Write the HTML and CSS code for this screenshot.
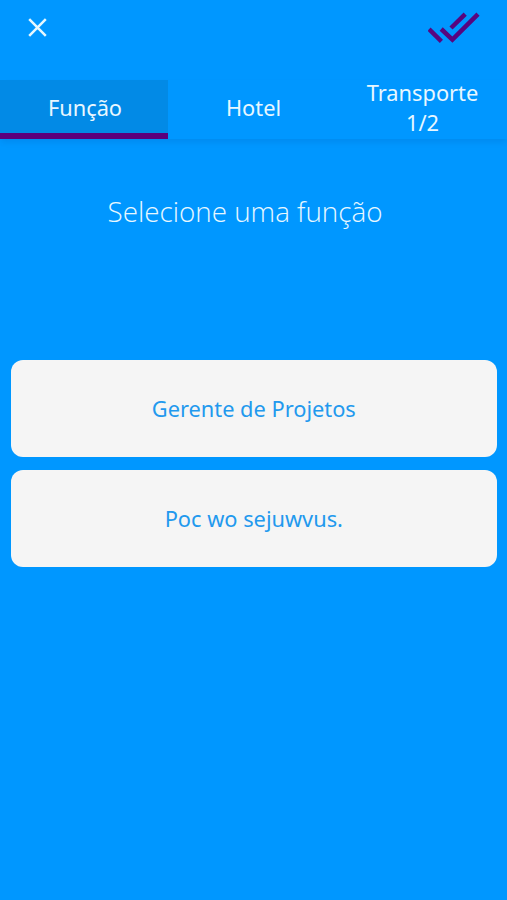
FILE: index.html
```
<!DOCTYPE html>
<html lang="pt-BR">
<head>
    <meta charset="UTF-8">
    <meta name="viewport" content="width=device-width, initial-scale=1.0">
    <title>Selecione uma função</title>
    <link rel="stylesheet" href="styles.css">
</head>
<body>

    <!-- Top bar -->
    <header class="top-bar">
        <svg class="close-icon" viewBox="0 0 20 20" width="20" height="20">
            <path d="M1.2 1.2 L17.8 17.8 M17.8 1.2 L1.2 17.8" />
        </svg>
        <svg class="check-icon" viewBox="0 0 52 32" width="52" height="32">
            <path d="M1 17.2 L13.4 29.4" />
            <path d="M13.2 17 L24.4 27.6 L50 2.2" />
            <path d="M23 16 L37.2 2.2" />
        </svg>
    </header>

    <!-- Tabs -->
    <nav class="tabs">
        <a class="tab active">Função</a>
        <a class="tab">Hotel</a>
        <a class="tab">Transporte 1/2</a>
    </nav>

    <main class="content">
        <h1 class="title">Selecione uma função</h1>

        <div class="options">
            <button class="option" type="button">Gerente de Projetos</button>
            <button class="option" type="button">Poc wo sejuwvus.</button>
        </div>
    </main>

</body>
</html>
```
FILE: styles.css
```
body {
    margin: 0;
    min-height: 900px;
    background: #0097ff;
    color: #fff;
    font-family: "Noto Sans", sans-serif;
}

/* Top bar */
.top-bar {
    display: flex;
    justify-content: space-between;
    align-items: flex-start;
    box-sizing: border-box;
    height: 80px;
    padding: 12px 27px 0 28px;
}

.close-icon {
    margin-top: 6px;
    fill: none;
    stroke: #e6f8ff;
    stroke-width: 2.5;
}

.check-icon {
    fill: none;
    stroke: #58067f;
    stroke-width: 4.5;
}

/* Tabs */
.tabs {
    display: grid;
    grid-template-columns: repeat(3, 1fr);
    grid-template-rows: 59px;
    height: 59px;
    box-shadow: 0 4px 6px -1px rgba(0, 30, 90, 0.1);
}

.tab {
    display: flex;
    align-items: center;
    justify-content: center;
    box-sizing: border-box;
    padding: 0 20px 3px;
    color: #e8f7ff;
    font-size: 21.8px;
    line-height: 30px;
    text-align: center;
}

.tab.active {
    width: 168px;
    padding: 2px 19px 0 21px;
    border-bottom: 6px solid #5c007c;
    background: #028ae6;
}

/* Content */
.title {
    margin: 52px 0 0;
    padding-right: 17px;
    color: #e8f7ff;
    font-family: "Open Sans", sans-serif;
    font-size: 27.8px;
    font-weight: 300;
    line-height: 40px;
    text-align: center;
}

.options {
    display: flex;
    flex-direction: column;
    gap: 12.4px;
    margin-top: 128.6px;
    padding: 0 10px 0 10.6px;
}

.option {
    height: 97.6px;
    border: none;
    border-radius: 12px;
    background: #f5f5f5;
    color: #2299ee;
    font-family: "Noto Sans", sans-serif;
    font-size: 21.8px;
}
```
